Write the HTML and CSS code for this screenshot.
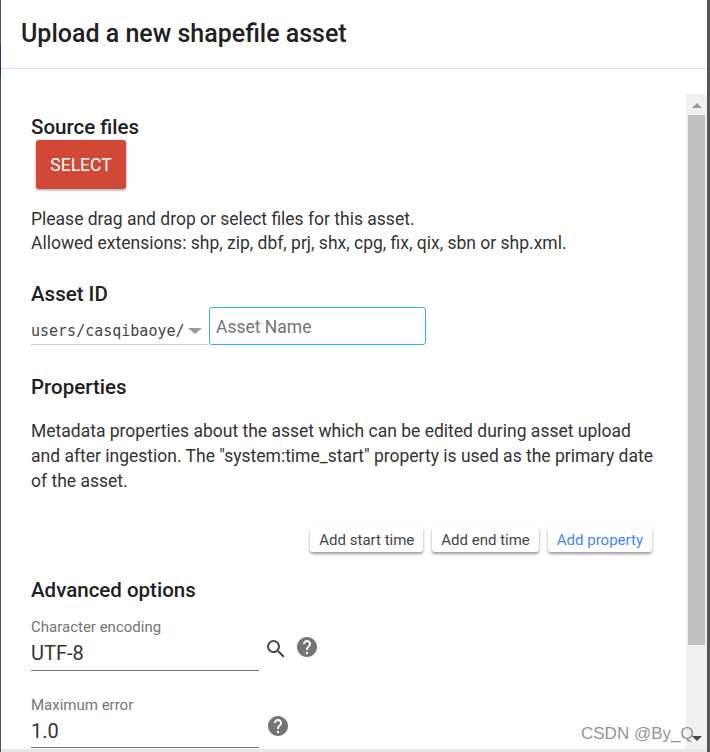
FILE: index.html
```html
<!DOCTYPE html>
<html lang="en">
<head>
  <meta charset="UTF-8">
  <meta name="viewport" content="width=device-width, initial-scale=1.0">
  <title>Upload a new shapefile asset</title>
  <link rel="stylesheet" href="styles.css">
</head>
<body>
  <div class="dialog">
    <header class="dialog-header">
      <h1>Upload a new shapefile asset</h1>
    </header>

    <div class="dialog-body">
      <main class="content">
        <h2 class="first-title">Source files</h2>
        <button class="select-btn">SELECT</button>
        <p class="hint">Please drag and drop or select files for this asset.<br>Allowed extensions: shp, zip, dbf, prj, shx, cpg, fix, qix, sbn or shp.xml.</p>

        <h2 class="asset-title">Asset ID</h2>
        <div class="asset-row">
          <div class="root-select">
            <span class="root-name">users/casqibaoye/</span>
            <span class="caret"></span>
          </div>
          <div class="name-input">Asset Name</div>
        </div>

        <h2 class="props-title">Properties</h2>
        <p class="props-text">Metadata properties about the asset which can be edited during asset upload and after ingestion. The "system:time_start" property is used as the primary date of the asset.</p>
        <div class="props-actions">
          <button class="small-btn">Add start time</button>
          <button class="small-btn">Add end time</button>
          <button class="small-btn primary">Add property</button>
        </div>

        <h2 class="advanced-title">Advanced options</h2>
        <div class="field-row encoding">
          <div class="field">
            <label>Character encoding</label>
            <div class="value">UTF-8</div>
          </div>
          <svg class="search-icon" width="24" height="24" viewBox="0 0 24 24"><path fill="#444" d="M15.5 14h-.79l-.28-.27A6.47 6.47 0 0 0 16 9.5 6.5 6.5 0 1 0 9.5 16c1.61 0 3.09-.59 4.23-1.57l.27.28v.79l5 4.99L20.49 19l-4.99-5zm-6 0C7.01 14 5 11.99 5 9.5S7.01 5 9.5 5 14 7.01 14 9.5 11.99 14 9.5 14z"/></svg>
          <svg class="help-icon" width="24" height="24" viewBox="0 0 24 24"><path fill="#757575" d="M12 2C6.48 2 2 6.48 2 12s4.48 10 10 10 10-4.48 10-10S17.52 2 12 2zm1 17h-2v-2h2v2zm2.07-7.75l-.9.92C13.45 12.9 13 13.5 13 15h-2v-.5c0-1.1.45-2.1 1.17-2.83l1.24-1.26c.37-.36.59-.86.59-1.41 0-1.1-.9-2-2-2s-2 .9-2 2H8c0-2.21 1.79-4 4-4s4 1.79 4 4c0 .88-.36 1.68-.93 2.25z"/></svg>
        </div>
        <div class="field-row error">
          <div class="field">
            <label>Maximum error</label>
            <div class="value">1.0</div>
          </div>
          <svg class="help-icon solo" width="24" height="24" viewBox="0 0 24 24"><path fill="#757575" d="M12 2C6.48 2 2 6.48 2 12s4.48 10 10 10 10-4.48 10-10S17.52 2 12 2zm1 17h-2v-2h2v2zm2.07-7.75l-.9.92C13.45 12.9 13 13.5 13 15h-2v-.5c0-1.1.45-2.1 1.17-2.83l1.24-1.26c.37-.36.59-.86.59-1.41 0-1.1-.9-2-2-2s-2 .9-2 2H8c0-2.21 1.79-4 4-4s4 1.79 4 4c0 .88-.36 1.68-.93 2.25z"/></svg>
        </div>
      </main>

      <div class="scrollbar">
        <span class="arrow-up"></span>
        <div class="thumb"></div>
        <span class="arrow-down"></span>
      </div>
    </div>
  </div>
  <div class="bottom-strip"></div>
  <div class="watermark">CSDN @By_Q</div>
</body>
</html>
```

FILE: styles.css
```css
html, body {
  height: 100%;
}

body {
  margin: 0;
  overflow: hidden;
  font-family: Roboto, Arial, sans-serif;
  color: #212121;
  background-color: #555;
  background-image: linear-gradient(#1c3a6b, #1c3a6b);
  background-size: 1px 32px;
  background-position: 0 45px;
  background-repeat: no-repeat;
}

.dialog {
  margin-left: 1px;
  width: 706px;
  height: 749px;
  background-color: #fff;
  display: flex;
  flex-direction: column;
}

.bottom-strip {
  margin-left: 1px;
  width: 706px;
  height: 3px;
  background-color: #e6e6e6;
}

.dialog-header {
  height: 68px;
  border-bottom: 1px solid #e0e0e0;
  padding-left: 20px;
}

h1 {
  margin: 0;
  font-size: 25px;
  font-weight: 500;
  line-height: 67px;
}

.dialog-body {
  flex: 1;
  display: flex;
  min-height: 0;
}

.content {
  flex: 1;
  padding: 0 30px;
  min-width: 0;
  overflow: hidden;
}

h2 {
  margin: 0;
  font-size: 20.5px;
  font-weight: 500;
  line-height: 24px;
}

.first-title {
  margin-top: 46px;
}

.select-btn {
  display: block;
  margin: 1px 0 0 5px;
  width: 90px;
  height: 49px;
  border: none;
  border-radius: 3px;
  background-color: #d14836;
  color: #fff;
  font-family: Roboto, Arial, sans-serif;
  font-size: 17.5px;
  box-shadow: 0 1px 3px rgba(0, 0, 0, 0.4);
}

.hint {
  margin: 18px 0 0;
  font-size: 17.5px;
  line-height: 24px;
  color: #333;
}

.asset-title {
  margin-top: 27px;
}

.asset-row {
  display: flex;
  align-items: flex-start;
  margin-top: 1px;
}

.root-select {
  width: 178px;
  height: 38px;
  border-bottom: 1px solid #ccc;
  display: flex;
  align-items: center;
  gap: 3px;
  padding-top: 10px;
  box-sizing: border-box;
}

.root-name {
  font-family: "DejaVu Sans Mono", monospace;
  font-size: 15px;
  color: #444;
}

.caret {
  border-left: 7px solid transparent;
  border-right: 7px solid transparent;
  border-top: 6px solid #999;
}

.name-input {
  width: 217px;
  height: 38px;
  box-sizing: border-box;
  border: 1px solid #29b6f6;
  border-radius: 3px;
  padding-left: 6px;
  font-size: 17.5px;
  line-height: 39px;
  color: #757575;
}

.props-title {
  margin-top: 30px;
}

.props-text {
  margin: 20px 0 0;
  font-size: 17.5px;
  line-height: 25px;
  color: #333;
}

.props-actions {
  display: flex;
  justify-content: flex-end;
  gap: 9px;
  margin-top: 33px;
  padding-right: 4px;
}

.small-btn {
  height: 25px;
  padding: 0 9px;
  border: none;
  border-radius: 3px;
  background-color: #fff;
  color: #444;
  font-family: Roboto, Arial, sans-serif;
  font-size: 15px;
  box-shadow: 0 2px 3px rgba(0, 0, 0, 0.4);
}

.small-btn.primary {
  color: #4285f4;
}

.advanced-title {
  margin-top: 26px;
}

.field-row {
  display: flex;
  align-items: flex-start;
}

.field {
  width: 228px;
  flex-shrink: 0;
  border-bottom: 1px solid #757575;
  padding-bottom: 3px;
}

.field label {
  display: block;
  font-size: 15px;
  line-height: 16px;
  color: #757575;
}

.value {
  margin-top: 4px;
  font-size: 20px;
  line-height: 28px;
  color: #333;
}

.encoding {
  margin-top: 17px;
}

.error {
  margin-top: 26px;
}

.error .field {
  padding-bottom: 2px;
}

.search-icon {
  margin: 18px 0 0 5px;
  flex-shrink: 0;
}

.help-icon {
  margin: 16px 0 0 7px;
  flex-shrink: 0;
}

.help-icon.solo {
  margin: 17px 0 0 7px;
}

.scrollbar {
  width: 21px;
  margin-top: 25px;
  background-color: #f0f0f0;
  display: flex;
  flex-direction: column;
  align-items: center;
}

.arrow-up {
  margin-top: 9px;
  border-left: 5px solid transparent;
  border-right: 5px solid transparent;
  border-bottom: 5px solid #999;
}

.thumb {
  margin-top: 7px;
  width: 17px;
  height: 530px;
  background-color: #bfbfbf;
}

.arrow-down {
  margin-top: auto;
  margin-bottom: 8px;
  border-left: 5px solid transparent;
  border-right: 5px solid transparent;
  border-top: 5px solid #444;
}

.watermark {
  position: absolute;
  left: 581px;
  top: 724px;
  font-family: "Liberation Sans", Arial, sans-serif;
  font-size: 17px;
  color: rgba(110, 110, 110, 0.75);
}
```
